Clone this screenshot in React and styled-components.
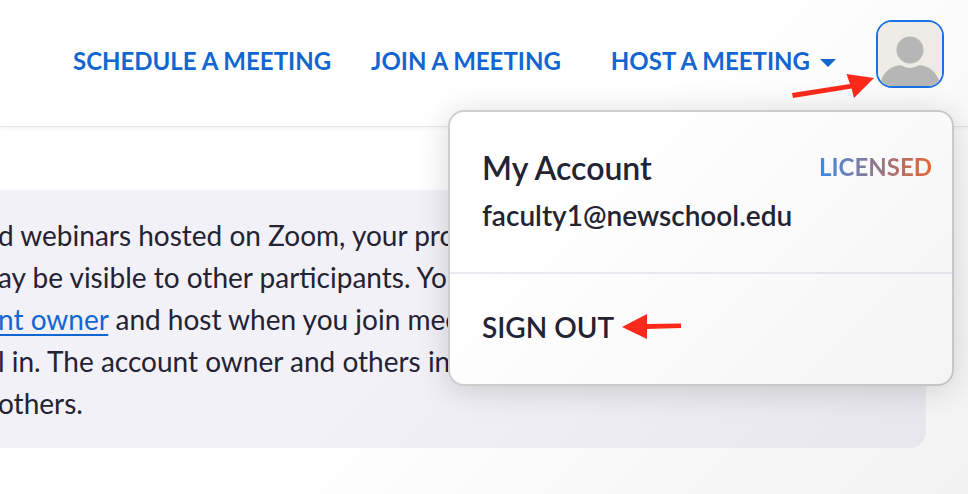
import React from "react";
//Styled
import styled, { createGlobalStyle } from "styled-components";

const App = () => {
  return (
    <Page>
      <GlobalStyle />
      <Header>
        <Nav>
          <NavLink href="#schedule">SCHEDULE A MEETING</NavLink>
          <NavLink href="#join">JOIN A MEETING</NavLink>
          <HostButton type="button">
            HOST A MEETING
            <Caret />
          </HostButton>
        </Nav>
        <Account>
          <AvatarButton type="button" aria-label="My account">
            <Avatar />
          </AvatarButton>
          <AvatarArrow />
          <Menu>
            <Profile>
              <ProfileTop>
                <Title>My Account</Title>
                <Badge>LICENSED</Badge>
              </ProfileTop>
              <Email>faculty1@newschool.edu</Email>
            </Profile>
            <MenuFooter>
              <SignOut type="button">SIGN OUT</SignOut>
              <SignOutArrow />
            </MenuFooter>
          </Menu>
        </Account>
      </Header>
      <Main>
        <Notice>
          <Line>d webinars hosted on Zoom, your pro</Line>
          <Line>ay be visible to other participants. Yo</Line>
          <Line>
            <a href="#owner">nt owner</a> and host when you join mee
          </Line>
          <Line>l in. The account owner and others in</Line>
          <Line>others.</Line>
        </Notice>
      </Main>
    </Page>
  );
};

const Caret = () => (
  <svg width="16" height="12" viewBox="0 0 16 12" aria-hidden="true">
    <path d="M0 4H16L8 12Z" fill="#1266d1" />
  </svg>
);

const Avatar = () => (
  <svg width="64" height="64" viewBox="0 0 64 64" aria-hidden="true">
    <rect width="64" height="64" fill="#f0efea" />
    <path
      d="M1 64C4 54 9 45 20 43.500C24 42.500 26 46 32 46C38 46 40 42.500 44 43.500C55 45 60 54 63 64Z"
      fill="#b9b9b9"
    />
    <circle cx="32" cy="28" r="13.5" fill="#b9b9b9" />
  </svg>
);

const AvatarArrow = () => (
  <ArrowOverlay width="84" height="28" viewBox="0 0 84 28" aria-hidden="true">
    <path d="M0 19L58 10L54.500 0L82 4L62 24L59.500 14.500L1 24Z" fill="#ff2a1a" />
  </ArrowOverlay>
);

const SignOutArrow = () => (
  <svg width="60" height="26" viewBox="0 0 60 26" aria-hidden="true">
    <path d="M0 13L25 0V10L59 9.500V14L25 15V25Z" fill="#ff2a1a" />
  </svg>
);

const GlobalStyle = createGlobalStyle`
  * {
    box-sizing: border-box;
  }

  body {
    margin: 0;
    font-family: "Lato", sans-serif;
    color: #232333;
    background: white;
  }

  button {
    font: inherit;
    color: inherit;
    background: none;
    border: none;
    padding: 0;
    cursor: pointer;
  }
`;

const Page = styled.div`
  position: relative;
  min-height: 100vh;
  overflow: hidden;

  /* soft shade towards the lower right corner */
  &::after {
    content: "";
    position: absolute;
    inset: 0;
    z-index: 20;
    pointer-events: none;
    background: linear-gradient(
      135deg,
      rgba(0, 0, 0, 0) 50%,
      rgba(0, 0, 0, 0.05) 100%
    );
  }
`;

const Header = styled.header`
  display: flex;
  justify-content: flex-end;
  align-items: flex-start;
  gap: 40px;
  height: 127px;
  padding: 20px 24px 0;
  border-bottom: 1px solid #e8e8e8;
  box-shadow: 0 1px 4px rgba(0, 0, 0, 0.06);
`;

const Nav = styled.nav`
  display: flex;
  align-items: center;
  gap: 40px;
  height: 82px;
  color: #1266d1;
  font-size: 24px;
  font-weight: 700;
  line-height: 30px;
  white-space: nowrap;
`;

const NavLink = styled.a`
  color: inherit;
  text-decoration: none;
`;

const HostButton = styled.button`
  display: flex;
  align-items: center;
  gap: 10px;
  margin-left: 10px;
`;

const Account = styled.div`
  position: relative;
`;

const AvatarButton = styled.button`
  display: block;
  width: 68px;
  height: 68px;
  border: 2px solid #1a73e8;
  border-radius: 16px;
  overflow: hidden;

  svg {
    display: block;
  }
`;

const ArrowOverlay = styled.svg`
  position: absolute;
  top: 54px;
  right: 68px;
`;

const Menu = styled.section`
  position: absolute;
  top: 90px;
  right: -10px;
  z-index: 10;
  width: 506px;
  background: white;
  border: 2px solid #cecece;
  border-radius: 16px;
  box-shadow: 0 4px 32px rgba(0, 0, 0, 0.16);
`;

const Profile = styled.div`
  padding: 35px 20px 39px 32px;
  border-bottom: 2px solid #ebebf2;
`;

const ProfileTop = styled.div`
  display: flex;
  justify-content: space-between;
  align-items: flex-start;
`;

const Title = styled.h2`
  margin: 0;
  font-size: 32px;
  font-weight: 600;
  line-height: 42px;
`;

const Badge = styled.span`
  font-size: 24px;
  font-weight: 700;
  line-height: 40px;
  color: transparent;
  background: linear-gradient(90deg, #3f8aea, #ea6a36);
  background-clip: text;
`;

const Email = styled.p`
  margin: 0;
  padding-top: 8px;
  font-size: 28px;
  font-weight: 600;
  line-height: 36px;
`;

const MenuFooter = styled.div`
  display: flex;
  align-items: center;
  gap: 8px;
  padding: 35px 32px 39px;
`;

const SignOut = styled.button`
  font-size: 28px;
  font-weight: 600;
  line-height: 36px;
`;

const Main = styled.main`
  padding: 63px 42px 0 0;
`;

const Notice = styled.section`
  padding: 24px 0;
  background: #f2f1f7;
  border-radius: 0 16px 16px 0;
`;

const Line = styled.p`
  margin: 0 0 0 -2px;
  font-size: 28px;
  line-height: 42px;
  white-space: nowrap;

  a {
    color: #1266d1;
    text-decoration-thickness: 2px;
    text-underline-offset: 4px;
  }
`;

export default App;
